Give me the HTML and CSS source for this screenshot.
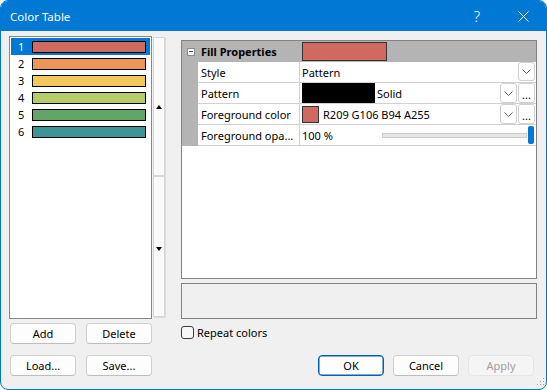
FILE: index.html
```html
<!DOCTYPE html>
<html>
<head>
<meta charset="utf-8">
<link rel="stylesheet" href="styles.css">
</head>
<body>
<div class="window">
  <div class="titlebar">
    <span class="title">Color Table</span>
    <span class="capbtn help">?</span>
    <span class="capbtn close">
      <svg width="11" height="11" viewBox="0 0 11 11"><path d="M0.5 0.5 L10.5 10.5 M10.5 0.5 L0.5 10.5" stroke="#fff" stroke-width="1" fill="none"/></svg>
    </span>
  </div>
  <div class="content">
    <div class="listrow">
      <div class="listbox">
        <div class="item selected"><span class="num">1</span><span class="sw" style="background:#d16a5e"></span></div>
        <div class="item"><span class="num">2</span><span class="sw" style="background:#ea9659"></span></div>
        <div class="item"><span class="num">3</span><span class="sw" style="background:#f0c85c"></span></div>
        <div class="item"><span class="num">4</span><span class="sw" style="background:#b6cd65"></span></div>
        <div class="item"><span class="num">5</span><span class="sw" style="background:#63a566"></span></div>
        <div class="item"><span class="num">6</span><span class="sw" style="background:#3c9497"></span></div>
      </div>
      <div class="splitter">
        <div class="pane"><span class="tri up"></span></div>
        <div class="pane"><span class="tri down"></span></div>
      </div>
    </div>
    <div class="rightcol">
      <div class="pgrid">
        <div class="prow header">
          <div class="gutter"><span class="collapse"></span></div>
          <div class="hname">Fill Properties</div>
          <div class="hval"><span class="hsw"></span></div>
        </div>
        <div class="prow">
          <div class="gutter"></div>
          <div class="pname">Style</div>
          <div class="pval"><span class="vtext">Pattern</span><span class="dd single"><svg width="9" height="5" viewBox="0 0 9 5"><path d="M0.5 0.5 L4.5 4.5 L8.5 0.5" stroke="#606060" fill="none"/></svg></span></div>
        </div>
        <div class="prow">
          <div class="gutter"></div>
          <div class="pname">Pattern</div>
          <div class="pval"><span class="blacksw"></span><span class="vtext solid">Solid</span><span class="dd"><svg width="9" height="5" viewBox="0 0 9 5"><path d="M0.5 0.5 L4.5 4.5 L8.5 0.5" stroke="#606060" fill="none"/></svg></span><span class="ell">...</span></div>
        </div>
        <div class="prow">
          <div class="gutter"></div>
          <div class="pname">Foreground color</div>
          <div class="pval"><span class="fgsw"></span><span class="vtext fgtext">R209 G106 B94 A255</span><span class="dd"><svg width="9" height="5" viewBox="0 0 9 5"><path d="M0.5 0.5 L4.5 4.5 L8.5 0.5" stroke="#606060" fill="none"/></svg></span><span class="ell">...</span></div>
        </div>
        <div class="prow">
          <div class="gutter"></div>
          <div class="pname">Foreground opa...</div>
          <div class="pval"><span class="vtext">100 %</span><span class="slider"><span class="track"></span><span class="thumb"></span></span></div>
        </div>
      </div>
      <div class="desc"></div>
    </div>
    <div class="btnrow first">
      <button class="btn">Add</button>
      <button class="btn">Delete</button>
    </div>
    <div class="checkrow">
      <span class="checkbox"></span><span>Repeat colors</span>
    </div>
    <div class="btnrow second">
      <button class="btn">Load...</button>
      <button class="btn">Save...</button>
    </div>
    <div class="dlgbtns">
      <button class="btn default">OK</button>
      <button class="btn">Cancel</button>
      <button class="btn disabled">Apply</button>
    </div>
  </div>
  <svg class="grip" width="10" height="10" viewBox="0 0 10 10">
    <rect x="8" y="0" width="1" height="1" fill="#a0a0a0"/>
    <rect x="5" y="3" width="1" height="1" fill="#a0a0a0"/>
    <rect x="8" y="3" width="1" height="1" fill="#a0a0a0"/>
    <rect x="2" y="6" width="1" height="1" fill="#a0a0a0"/>
    <rect x="5" y="6" width="1" height="1" fill="#a0a0a0"/>
    <rect x="8" y="6" width="1" height="1" fill="#a0a0a0"/>
  </svg>
</div>
</body>
</html>
```
FILE: styles.css
```css
* { box-sizing: border-box; }
html, body { margin: 0; padding: 0; background: #fff; }
body { font-family: "Noto Sans", "Open Sans", sans-serif; font-size: 11px; color: #000; }

.window {
  width: 547px; height: 390px;
  border: 1px solid #0078d4;
  border-radius: 8px;
  background: #f0f0f0;
  overflow: hidden;
  position: relative;
}

.titlebar {
  height: 30px;
  background: #0078d4;
  color: #fff;
  display: flex;
  align-items: center;
  padding-left: 9px;
  font-size: 11.5px;
}
.titlebar .title { flex: 1; }
.capbtn { width: 46px; height: 30px; display: flex; align-items: center; justify-content: center; }
.help { font-size: 15px; font-weight: 300; padding-bottom: 1px; }

.content {
  display: grid;
  grid-template-columns: 157px 356px;
  grid-template-rows: 283px 24px 33px;
  column-gap: 15px;
  padding: 5px 0 0 8px;
}

.listrow { display: flex; align-items: flex-start; }
.listbox {
  width: 144px; height: 283px;
  border: 1px solid #828790;
  background: #fff;
  padding: 1px;
}
.item { height: 17px; display: flex; align-items: center; padding-left: 7px; }
.item .num { width: 14px; line-height: 17px; }
.item .sw { width: 114px; height: 12px; border: 1px solid #000; }
.item.selected { background: #0078d7; color: #fff; }

.splitter { margin-left: 1px; margin-top: 1px; width: 13px; display: flex; flex-direction: column; }
.pane {
  width: 12px;
  border: 1px solid #d6d6d6;
  background: #fafafa;
  box-shadow: 1px 1px 0 #dcdcdc;
  display: flex; align-items: center; justify-content: center;
}
.pane:first-child { height: 139px; }
.pane:last-child { height: 141px; margin-top: 0; }
.tri { width: 0; height: 0; border-left: 3px solid transparent; border-right: 3px solid transparent; }
.tri.up { border-bottom: 4px solid #000; }
.tri.down { border-top: 4px solid #000; margin-top: 4px; }

.rightcol { display: flex; flex-direction: column; }
.pgrid {
  margin-top: 4px;
  height: 239px;
  border: 1px solid #828282;
  background: #fff;
}
.prow { display: flex; height: 21px; }
.gutter { width: 16px; background: #b4b4b4; display: flex; align-items: center; justify-content: center; }
.prow.header { background: #b4b4b4; }
.collapse {
  width: 8px; height: 8px; border: 1px solid #8a8a8a; background: #fff; margin-left: 2px;
  display: flex; align-items: center; justify-content: center;
}
.collapse::after { content: ""; width: 4px; height: 1px; background: #2b4a8a; }
.hname { width: 102px; padding-left: 3px; font-weight: bold; display: flex; align-items: center; }
.hval { flex: 1; padding-left: 2px; padding-top: 1px; }
.hsw { display: block; width: 85px; height: 19px; background: #d16a5e; border: 1px solid #333; }

.pname {
  width: 102px; padding-left: 3px;
  border-right: 1px solid #d0d0d0;
  border-bottom: 1px solid #d0d0d0;
  display: flex; align-items: center;
  white-space: nowrap;
}
.pval {
  flex: 1; padding-left: 2px; padding-right: 1px;
  border-bottom: 1px solid #d0d0d0;
  display: flex; align-items: center;
}
.vtext { white-space: nowrap; }
.blacksw { width: 73px; height: 20px; background: #000; }
.solid { margin-left: 2px; }
.fgsw { width: 17px; height: 17px; background: #d16a5e; border: 1px solid #333; }
.fgtext { margin-left: 4px; }
.dd, .ell {
  width: 17px; height: 20px;
  border: 1px solid #cfcfcf; border-radius: 3px;
  background: #fff;
  display: flex; align-items: center; justify-content: center;
}
.dd { margin-left: auto; }
.dd.single { height: 19px; align-self: flex-start; }
.ell { margin-left: 1px; font-size: 11px; line-height: 11px; align-items: flex-end; padding-bottom: 2px; }
.slider { margin-left: auto; margin-right: 1px; display: flex; align-items: center; }
.track { width: 145px; height: 5px; background: #e6e6e6; border: 1px solid #cccccc; }
.thumb { width: 6px; height: 18px; background: #0078d7; border-radius: 2px; margin-left: 1px; }

.desc { margin-top: 4px; height: 36px; border: 1px solid #828282; background: #f0f0f0; }

.btnrow { display: flex; gap: 10px; padding-left: 1px; }
.btnrow.first { padding-top: 4px; }
.btnrow.second { padding-top: 12px; }
.btn {
  width: 66px; height: 21px;
  font-family: inherit; font-size: 11px; color: #000;
  background: #fdfdfd;
  border: 1px solid #d0d0d0;
  border-bottom-color: #bdbdbd;
  border-radius: 4px;
  padding: 0;
}
.btn.default { border: 1px solid #005fb8; box-shadow: inset 0 0 0 0.5px #005fb8; }
.btn.disabled { background: #f5f5f5; border-color: #e5e5e5; color: #a0a0a0; }

.checkrow { display: flex; align-items: center; gap: 3px; padding-top: 7px; height: 20px; }
.checkbox { width: 13px; height: 13px; border: 1px solid #3a3a3a; border-radius: 3px; background: #f7f7f7; }

.dlgbtns { display: flex; gap: 9px; justify-content: flex-end; padding-right: 3px; padding-top: 12px; }

.grip { position: absolute; right: 1px; bottom: 1px; }
```
